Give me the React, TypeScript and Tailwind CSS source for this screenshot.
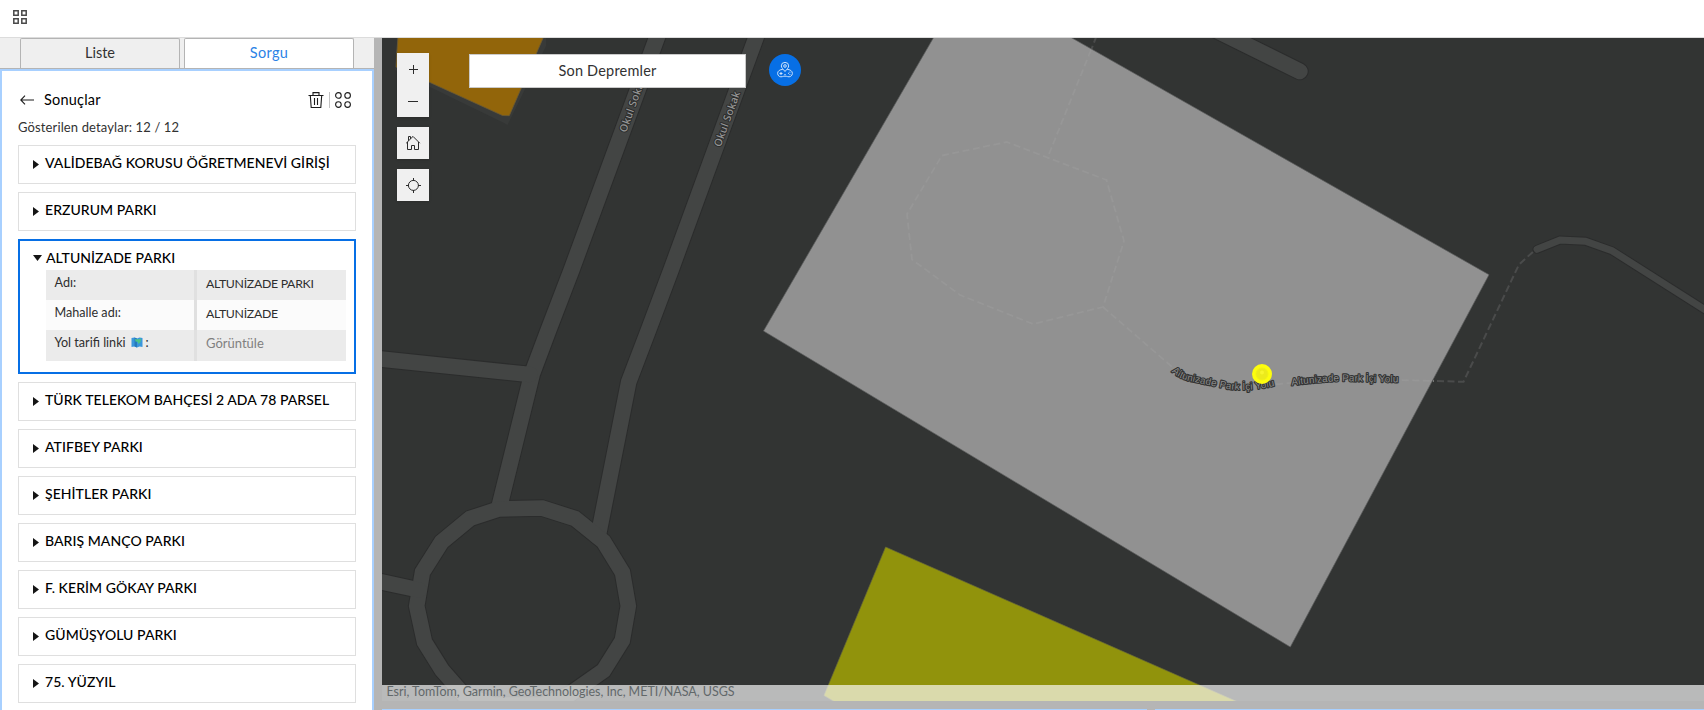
import React from "react";

const parks = [
  "VALİDEBAĞ KORUSU ÖĞRETMENEVİ GİRİŞİ",
  "ERZURUM PARKI",
  "ALTUNİZADE PARKI",
  "TÜRK TELEKOM BAHÇESİ 2 ADA 78 PARSEL",
  "ATIFBEY PARKI",
  "ŞEHİTLER PARKI",
  "BARIŞ MANÇO PARKI",
  "F. KERİM GÖKAY PARKI",
  "GÜMÜŞYOLU PARKI",
  "75. YÜZYIL",
];

const roads: { d: string; w: number }[] = [
  { d: "M659 32 L571.5 270 L548.5 330 L532 374 L499 508", w: 16 },
  { d: "M758 32 L671 270 L648.5 330 L628.7 382 L598 537", w: 15.5 },
  { d: "M376 358.5 L530 374.5", w: 15.5 },
  {
    d: "M542 508 L575 518.5 L603.5 541.5 L622.5 572.5 L628.3 606 L622.3 640.5 L603.5 670.5 L570 694 L542 705 L493 705 L463 694 L442 670 L424.5 642 L416.7 606 L422.5 572 L441.5 542 L470 518.5 L499 509 Z",
    w: 15.5,
  },
  { d: "M376 580.7 L419 590", w: 15.5 },
  { d: "M1210 27 L1299.7 71.3", w: 16 },
  { d: "M1537 249.3 L1560 240 L1585.4 241.3 L1612 250.7 L1710 313", w: 7 },
];

function MapCanvas() {
  return (
    <svg viewBox="382 38 1322 663" className="block h-[663px] w-[1322px] bg-[#323433]">
      <defs>
        <path id="label-west" d="M1171.5 371.5 Q1181 380 1192 381.5 L1222 388 Q1245 393 1276 385.5" />
        <path id="label-east" d="M1291.5 385.5 Q1330 380.5 1352 381.5 L1400 382.5" />
      </defs>
      <path d="M398 38 L546 38 L546 46 L507.5 125 L504 123 L395 70 Z" fill="#383a39" />
      <path d="M398 36 L544 36 L509.3 115.7 L502.5 115.5 L396 67 L396.7 55 Z" fill="#92650a" stroke="#6b5a35" strokeWidth="0.8" />
      <g fill="none" strokeLinecap="round" strokeLinejoin="miter">
        {roads.map((r) => (
          <path key={r.d} d={r.d} stroke="#2b2c2c" strokeWidth={r.w + 2} />
        ))}
        {roads.map((r) => (
          <path key={r.d} d={r.d} stroke="#434544" strokeWidth={r.w} />
        ))}
      </g>
      <g fill="none" stroke="#4a4b4b" strokeWidth="2" strokeDasharray="7 3.5">
        <path d="M1096.5 36 L1085 66" />
        <path d="M1437 381 L1463.5 381.8 L1519 264.5 L1535 250" />
      </g>
      <path d="M934.5 36 L1068.5 36 L1489 274.7 L1290.3 647 L763.5 331 Z" fill="#919191" stroke="#5c5d5d" strokeWidth="0.7" />
      <g fill="none" stroke="#979797" strokeWidth="1.8" strokeDasharray="7 3.5">
        <path d="M1091 50 L1049 154" />
        <path d="M942 155.5 L1006.7 142 L1106.5 180 L1124 241 L1103 307 L1033 324 L960 295 L912 259.5 L907 214 Z" />
        <path d="M1103 307 L1171 366 L1215 386 L1280 384 L1335 378.5 L1434 381" />
      </g>
      <g
        fontFamily="'Noto Sans', sans-serif"
        fontSize="10.5"
        fontWeight="500"
        fill="#959595"
        stroke="#2c2d2d"
        strokeWidth="2"
        strokeLinejoin="round"
        paintOrder="stroke"
      >
        <text transform="translate(626 133) rotate(-70)" textLength="58" lengthAdjust="spacing">Okul Sokak</text>
        <text transform="translate(720.5 147.5) rotate(-70)" textLength="58" lengthAdjust="spacing">Okul Sokak</text>
      </g>
      <g
        fontFamily="'Liberation Sans', sans-serif"
        fontSize="10"
        fill="#8a8a8a"
        stroke="#333434"
        strokeWidth="2.2"
        strokeLinejoin="round"
        paintOrder="stroke"
      >
        <text>
          <textPath href="#label-west" textLength="107" lengthAdjust="spacing">Altunizade Park İçi Yolu</textPath>
        </text>
        <text>
          <textPath href="#label-east" textLength="107" lengthAdjust="spacing">Altunizade Park İçi Yolu</textPath>
        </text>
      </g>
      <circle cx="1262" cy="374" r="10" fill="#fdfd0e" />
      <circle cx="1262" cy="374" r="6" fill="#ecea1c" stroke="#f2f016" />
      <circle cx="1262" cy="372.6" r="2" fill="#f7f52c" />
      <path d="M885.6 547 L1238 702 L835 702 L824 695.5 Z" fill="#91930c" stroke="#66673a" strokeWidth="0.7" />
    </svg>
  );
}

function MapButton({ children }: { children: React.ReactNode }) {
  return (
    <button className="flex h-8 w-8 items-center justify-center bg-[#f0f0f0] text-[#2b2b2b]">
      <svg viewBox="0 0 16 16" className="h-4 w-4" fill="none" stroke="currentColor" strokeWidth="1">
        {children}
      </svg>
    </button>
  );
}

function AttributeRow({ label, shaded, children }: { label: React.ReactNode; shaded?: boolean; children: React.ReactNode }) {
  return (
    <div className={`flex h-[30px] text-[13px] leading-[26px] text-[#2e2e2e] last:h-[31px] ${shaded ? "bg-[#ebebeb]" : "bg-[#fbfbfb]"}`}>
      <div className="w-[151px] border-r-3 border-[#e0e0e0] pl-[8.5px] text-[12.6px]">{label}</div>
      <div className="pl-[9px]">{children}</div>
    </div>
  );
}

function FoldedMap() {
  return (
    <svg viewBox="0 0 12 11" className="mr-[3px] ml-[5px] inline-block h-[11px] w-3 align-[-1px]">
      <path d="M0.5 1 L3.5 0.5 L6 1.5 L8.5 0.5 L11.5 1 V10 L8.5 9.5 L6 10.5 L3.5 9.5 L0.5 10 Z" fill="#3a97dc" />
      <path d="M3.5 0.5 L6 1.5 V10.5 L3.5 9.5 Z" fill="#2579bd" />
      <path d="M4 2 L7 2.5 L10 1.5 L9.5 5 L7.5 7 L6.5 4.8 L4.5 4.5 Z" fill="#4cc486" />
    </svg>
  );
}

function ParkCard({ name, open }: { name: string; open: boolean }) {
  return (
    <div
      className={`shrink-0 ${
        open ? "h-[135px] border-2 border-[#076fe5] pt-[5px] pl-[13px]" : "h-[39px] border border-[#dfdfdf] pt-[5px] pl-[14px]"
      }`}
    >
      <div className="flex h-[22px] items-center">
        {open ? (
          <svg viewBox="0 0 9 6" className="mt-px mr-1 h-1.5 w-[9px]"><path d="M0 0 H9 L4.5 6 Z" fill="#151515" /></svg>
        ) : (
          <svg viewBox="0 0 6 9" className="mt-[4px] mr-[6px] h-[9px] w-1.5"><path d="M0 0 L6 4.5 L0 9 Z" fill="#151515" /></svg>
        )}
        <span className="text-[14px] font-medium tracking-[0.05px] whitespace-nowrap text-black">{name}</span>
      </div>
      {open && (
        <div className="mt-[2px] ml-[13px] w-[300px]">
          <AttributeRow label="Adı:" shaded><span className="text-[12.3px] tracking-[-0.3px]">ALTUNİZADE PARKI</span></AttributeRow>
          <AttributeRow label="Mahalle adı:"><span className="text-[12.3px] tracking-[-0.3px]">ALTUNİZADE</span></AttributeRow>
          <AttributeRow label={<>Yol tarifi linki<FoldedMap />:</>} shaded>
            <a className="text-[#808080]">Görüntüle</a>
          </AttributeRow>
        </div>
      )}
    </div>
  );
}

function Sidebar() {
  return (
    <aside className="flex h-full w-[374px] shrink-0 flex-col bg-[#efefef]">
      <div className="flex h-[31px] shrink-0 gap-1 border-b border-[#b4b4b4] pl-5 text-[14.5px] leading-[27px]">
        <button className="w-40 rounded-t-[2px] border border-b-0 border-[#b4b4b4] pb-[2px] text-[#323232]">Liste</button>
        <button className="w-[170px] rounded-t-[2px] border border-b-0 border-[#b4b4b4] bg-white pb-[2px] tracking-[0.3px] text-[#2b83e6]">Sorgu</button>
      </div>
      <div className="flex min-h-0 flex-1 flex-col overflow-hidden border-2 border-b-0 border-[#a8d0ff] bg-white px-4 pt-[17px]">
        <div className="flex h-[24px] shrink-0 items-center text-[#1c1c1c]">
          <svg viewBox="0 0 14 10" className="ml-0.5 h-2.5 w-3.5" fill="none" stroke="currentColor" strokeWidth="1.1">
            <path d="M14 5 H0.8 M5 0.6 L0.8 5 L5 9.4" />
          </svg>
          <span className="ml-[10px] text-[14.5px] tracking-[0.2px] text-black">Sonuçlar</span>
          <svg viewBox="0 0 16 16" className="ml-auto h-4 w-4" fill="none" stroke="currentColor" strokeWidth="1.1">
            <path d="M0.5 3.5 H15.5 M5 3.5 V0.6 H11 V3.5 M2.3 3.5 L3.2 15.5 H12.8 L13.7 3.5 M6.5 6 V13 M9.5 6 V13" />
          </svg>
          <span className="ml-[5px] h-4 w-px bg-[#c4c4c4]" />
          <svg viewBox="0 0 16 16" className="mr-[5px] mb-px ml-[5px] h-4 w-4" fill="none" stroke="currentColor" strokeWidth="1.1">
            <circle cx="3.4" cy="3.4" r="2.8" />
            <circle cx="12.6" cy="3.4" r="2.8" />
            <circle cx="3.4" cy="12.6" r="2.8" />
            <circle cx="12.6" cy="12.6" r="2.8" />
          </svg>
        </div>
        <div className="mt-[4px] h-[29px] shrink-0 text-[13px] leading-[23px] tracking-[0.13px] text-[#323232]">Gösterilen detaylar: 12 / 12</div>
        <div className="flex flex-col gap-2">
          {parks.map((name) => (
            <ParkCard key={name} name={name} open={name === "ALTUNİZADE PARKI"} />
          ))}
        </div>
      </div>
    </aside>
  );
}

export default function App() {
  return (
    <div className="flex h-[710px] w-[1704px] flex-col overflow-hidden bg-white font-['Lato',sans-serif]">
      <header className="flex h-[38px] shrink-0 items-center border-b border-[#dcdcdc] pl-[13px]">
        <svg viewBox="0 0 14 14" className="mt-[-3px] h-3.5 w-3.5" fill="none" stroke="#4a4a4a" strokeWidth="1.5">
          <path d="M0.8 0.8 H5.2 V5.2 H0.8 Z M8.8 0.8 H13.2 V5.2 H8.8 Z M0.8 8.8 H5.2 V13.2 H0.8 Z M8.8 8.8 H13.2 V13.2 H8.8 Z" />
        </svg>
      </header>
      <main className="flex min-h-0 flex-1">
        <Sidebar />
        <div className="w-2 shrink-0 bg-[#b5b5b5]" />
        <section className="flex min-w-0 flex-1 flex-col">
          <div className="relative h-[663px] shrink-0">
            <MapCanvas />
            <div className="absolute top-[15px] left-[15px] flex flex-col gap-[10px]">
              <div className="flex flex-col shadow">
                <MapButton><path d="M4 8.5 H13 M8.5 4 V13" /></MapButton>
                <MapButton><path d="M3 8.5 H13" /></MapButton>
              </div>
              <div className="shadow">
                <MapButton>
                  <path d="M1.2 8.2 L8 1.4 L14.8 8.2 M2.5 7 V14.5 H6.5 V10.5 H9.5 V14.5 H13.5 V7 M3.5 5.8 V1.5 H5.5 V3.9" />
                </MapButton>
              </div>
              <div className="shadow">
                <MapButton>
                  <circle cx="8.4" cy="8.4" r="5" />
                  <path d="M8.5 1 V4 M8.5 13 V16 M1 8.5 H4 M13 8.5 H16" />
                </MapButton>
              </div>
            </div>
            <div className="absolute top-[16px] left-[87px] flex h-[34px] w-[277px] items-center justify-center border border-[#cacaca] bg-white text-[14.5px] tracking-[0.2px] text-[#323232]">
              Son Depremler
            </div>
            <div className="absolute top-4 left-[387px] flex h-8 w-8 items-center justify-center rounded-full bg-[#076fe5]">
              <svg viewBox="0 0 16 16" className="h-4 w-4" fill="none" stroke="#cfe3fb" strokeWidth="1">
                <path d="M8 9.5 C6 7 4.3 5.6 4.3 3.9 A3.7 3.5 0 0 1 11.7 3.9 C11.7 5.6 10 7 8 9.5 Z" />
                <circle cx="8" cy="4" r="1.3" />
                <path d="M5.8 7.4 C3 7.4 0.6 9 0.6 11.4 C0.6 14.2 3.5 15.4 5.5 14.6 C7 14 9 14 10.5 14.6 C12.5 15.4 15.4 14.2 15.4 11.4 C15.4 9 13 7.4 10.2 7.4" />
                <path d="M4 10 V13 M2.5 11.5 H5.5 M7.3 12.6 H8.7 M11 11.3 H12 M12.4 12.6 H13.4 M12.4 10.2 H13.4" />
              </svg>
            </div>
            <div className="absolute bottom-0 left-0 h-4 w-full bg-white/66 pl-[4.5px] text-[12.5px] leading-[14px] tracking-[-0.03px] text-[#62686a]">
              Esri, TomTom, Garmin, GeoTechnologies, Inc, METI/NASA, USGS
            </div>
          </div>
          <div className="h-2 bg-[#b5b5b5]" />
          <div className="flex h-px gap-2 bg-[#b5b5b5]">
            <div className="w-[765px] bg-[#a8d0ff]" />
            <div className="flex-1 bg-[#a8d0ff]" />
          </div>
        </section>
      </main>
    </div>
  );
}
